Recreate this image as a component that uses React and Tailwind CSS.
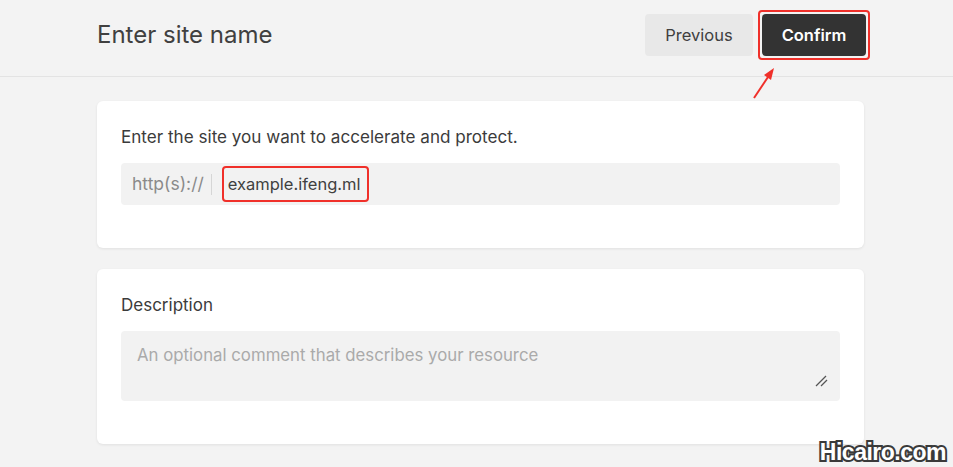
import React from 'react';

// Site setup step: name + description
export default function App() {
  return (
    <div className="relative min-h-[467px] w-full bg-[#f3f3f3] font-['Inter','Liberation_Sans',sans-serif] text-[#3b3b3b]">
      {/* Header */}
      <div className="border-b border-[#e3e3e3]">
        <div className="ml-[97px] flex h-[76px] w-[769px] items-center justify-between pb-[6px]">
          <h1 className="text-[24px] font-normal text-[#404040]">Enter site name</h1>
          <div className="flex items-center gap-[9px]">
            <button className="h-[42px] w-[108px] rounded-[4px] bg-[#e8e8e8] text-[16.5px] text-[#404040]">
              Previous
            </button>
            <div className="relative">
              <button className="h-[42px] w-[104px] rounded-[4px] bg-[#333333] text-[16.5px] font-semibold text-white">
                Confirm
              </button>
              <div className="pointer-events-none absolute -inset-1 rounded-[4px] border-2 border-[#f0302a]" />
              <svg className="absolute left-[-12px] top-[48px]" width="28" height="40" viewBox="0 0 28 40">
                <line x1="4" y1="36" x2="20" y2="12" stroke="#f0302a" strokeWidth="2" />
                <polygon points="24,6 14,13 21,18" fill="#f0302a" />
              </svg>
            </div>
          </div>
        </div>
      </div>

      {/* Cards */}
      <div className="ml-[97px] flex w-[767px] flex-col gap-[21px] pt-[24px]">
        <div className="rounded-[6px] bg-white px-6 pb-[43px] pt-6 shadow-[0_1px_3px_rgba(0,0,0,0.08)]">
          <p className="text-[17.1px] leading-6 text-[#3b3b3b]">Enter the site you want to accelerate and protect.</p>
          <div className="mt-[14px] flex h-[42px] items-center rounded-[4px] bg-[#f2f2f2]">
            <span className="pl-[11px] text-[17.5px] text-[#8a8a8a]">http(s)://</span>
            <span className="ml-[7px] h-[21px] w-px bg-[#d6d6d6]" />
            <span className="relative ml-[16px] text-[16.5px] text-[#404040]">
              example.ifeng.ml
              <span className="pointer-events-none absolute -bottom-[6px] -left-[6px] -right-[8px] -top-[6px] rounded-[4px] border-2 border-[#f0302a]" />
            </span>
          </div>
        </div>

        <div className="rounded-[6px] bg-white px-6 pb-[43px] pt-6 shadow-[0_1px_3px_rgba(0,0,0,0.08)]">
          <p className="text-[17px] leading-6 text-[#3b3b3b]">Description</p>
          <div className="relative mt-[14px] h-[70px] rounded-[4px] bg-[#f2f2f2] px-4 pt-[12px]">
            <span className="text-[16.8px] text-[#aaaaaa]">An optional comment that describes your resource</span>
            <svg className="absolute bottom-[13px] right-[11px]" width="14" height="14" viewBox="0 0 14 14">
              <line x1="1" y1="12" x2="11" y2="2" stroke="#555" strokeWidth="1.3" />
              <line x1="6" y1="12" x2="12" y2="6" stroke="#555" strokeWidth="1.3" />
            </svg>
          </div>
        </div>
      </div>

      {/* Watermark */}
      <div className="absolute bottom-[3px] right-[7px] font-['Liberation_Sans',sans-serif] text-[23px] font-bold leading-none tracking-[-0.5px] text-white [-webkit-text-stroke:4px_#3a3a3a] [paint-order:stroke_fill]">
        Hicairo.com
      </div>
    </div>
  );
}
